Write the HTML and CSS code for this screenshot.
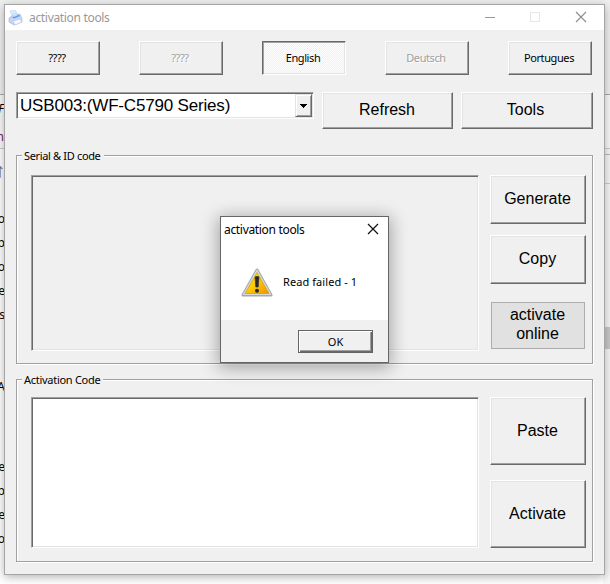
FILE: index.html
```html
<!DOCTYPE html>
<html lang="en">
<head>
<meta charset="utf-8">
<title>activation tools</title>
<link rel="stylesheet" href="styles.css">
</head>
<body>
<div class="desktop">
  <div class="backdrop">
    <div class="back-top"></div>
    <div class="back-tabs"><span class="b1">F</span><span class="b2">m</span></div>
    <div class="back-page">
      <div class="back-text">
        <div class="arrow">↑</div>
        <p>to<br>p<br>o<br>ne<br>s<br><br><br>A</p>
        <p>e<br>p<br>ne<br>o</p>
      </div>
      <div class="back-side"><div class="ruler"></div><div class="thumb"></div></div>
    </div>
  </div>

  <main class="window">
    <header class="titlebar">
      <svg class="printer" viewBox="0 0 16 16">
        <path d="M2 1 7 0 11 6 5 8Z" fill="#e4edfb" stroke="#c2d0ec" stroke-width=".7"/>
        <path d="M1 8 4 6 12 4 14 9 14 12 6 15 1 12Z" fill="#cbd3f3" stroke="#a9b4df" stroke-width=".7"/>
        <path d="M4 7.500 10 4.500 12 6 6 8.500Z" fill="#4aa3f5"/>
        <path d="M4 3 8 2 10 5 6 7Z" fill="#c5e5fb"/>
        <path d="M5 11 12 9 14 12 7 15Z" fill="#f5f8ff" stroke="#b5bfe5" stroke-width=".6"/>
      </svg>
      <span class="caption">activation tools</span>
      <svg class="controls" viewBox="0 0 110 12">
        <path d="M1 6.5H11" stroke="#999"/>
        <rect x="46.500" y="1.500" width="9" height="9" fill="none" stroke="#e6e6e6"/>
        <path d="M92 1 102 11M102 1 92 11" stroke="#8c8c8c" stroke-width="1.100"/>
      </svg>
    </header>
    <div class="client">
      <div class="languages">
        <button class="btn small">????</button>
        <button class="btn small off">????</button>
        <button class="btn small pressed">English</button>
        <button class="btn small off">Deutsch</button>
        <button class="btn small">Portugues</button>
      </div>
      <div class="device">
        <div class="combo"><span>USB003:(WF-C5790 Series)</span><i class="drop"><svg viewBox="0 0 7 4"><path d="M0 0H7V1H6V2H5V3H4V4H3V3H2V2H1V1H0Z"/></svg></i></div>
        <button class="btn refresh">Refresh</button>
        <button class="btn tools">Tools</button>
      </div>
      <section class="group serial">
        <h2><span class="t-serial">Serial &amp; ID code</span></h2>
        <div class="field"></div>
        <div class="actions">
          <button class="btn">Generate</button>
          <button class="btn">Copy</button>
          <button class="flat">activate<br>online</button>
        </div>
      </section>
      <section class="group activation">
        <h2><span class="t-code">Activation Code</span></h2>
        <div class="field white"></div>
        <div class="actions">
          <button class="btn">Paste</button>
          <button class="btn">Activate</button>
        </div>
      </section>
    </div>
  </main>

  <aside class="dialog">
    <header><span class="caption">activation tools</span>
      <svg class="close" viewBox="0 0 12 12"><path d="M1 1 11 11M11 1 1 11" stroke="#111" stroke-width="1.200"/></svg>
    </header>
    <div class="message">
      <svg class="warning" viewBox="0 0 32 29">
        <defs><linearGradient id="amber" x1="0" y1="0" x2="1" y2="1"><stop offset="0" stop-color="#fff200"/><stop offset=".5" stop-color="#fcc808"/><stop offset="1" stop-color="#ef9200"/></linearGradient></defs>
        <path d="M16 2 30 27H2Z" fill="#a4a9ae" stroke="#a4a9ae" stroke-width="3" stroke-linejoin="round"/>
        <path d="M16 2.500 29.300 26.300H2.700Z" fill="#d7dadd" stroke="#d7dadd" stroke-width="1.500" stroke-linejoin="round"/>
        <path d="M16 4.500 28 25.500H4Z" fill="url(#amber)" stroke="#d39b10" stroke-width=".7"/>
        <path d="M14 9Q16 7.500 18 9L17.200 19H14.800Z" fill="#252b32" stroke="#252b32" stroke-width=".6"/>
        <circle cx="16" cy="22.700" r="2" fill="#252b32"/>
      </svg>
      <span>Read failed - 1</span>
    </div>
    <footer><button class="ok"><span>OK</span></button></footer>
  </aside>
</div>
</body>
</html>
```
FILE: styles.css
```css
* { box-sizing: border-box; }
body { margin: 0; width: 610px; height: 584px; overflow: hidden; font: 16px "Liberation Sans", Arial, sans-serif; color: #000; }
button { margin: 0; padding: 0; font: inherit; color: #000; border-radius: 0; }
svg { display: block; }
.desktop { position: relative; width: 610px; height: 584px; overflow: hidden; }

/* page behind the window */
.backdrop { display: flex; flex-direction: column; height: 584px; background: #fff; font: 12px "Noto Sans", sans-serif; }
.back-top { flex: none; height: 94px; background: #f0f0f0; }
.back-tabs { flex: none; height: 55px; background: #fafafa; border-top: 1px solid #aaa; border-bottom: 1px solid #ccc; display: flex; flex-direction: column; line-height: 28px; }
.back-tabs span { display: flex; justify-content: flex-end; width: 4px; height: 28px; }
.b1 { font-style: italic; }
.b2 { color: #7a2460; }
.back-page { flex: 1; min-height: 0; display: flex; justify-content: space-between; }
.back-text { width: 5px; direction: rtl; line-height: 24px; white-space: nowrap; }
.back-text p { margin: 0 0 56px; }
.arrow { height: 58px; line-height: 42px; font-size: 20px; color: #777; }
.back-side { width: 7px; background: #f7f7f7; }
.ruler { height: 30px; margin-top: 5px; border-top: 1px solid #bbb; border-bottom: 1px solid #ccc; }
.thumb { height: 22px; margin-top: 143px; background: #c9c9c9; }

/* main window */
.window { position: absolute; left: 4px; top: 4px; width: 601px; height: 571px; background: #f0f0f0; border: 1px solid #a5a5a5; box-shadow: 0 2px 9px rgba(0,0,0,.3); }
.titlebar { display: flex; align-items: center; height: 25px; padding-left: 3px; background: #fff; color: #999; }
.printer { width: 16px; height: 16px; }
.caption { font: 12px "Noto Sans", sans-serif; white-space: nowrap; letter-spacing: -.32px; }
.titlebar .caption { margin-left: 5px; }
.controls { width: 110px; height: 12px; margin-left: auto; margin-right: 10px; margin-bottom: 2px; }
.client { padding: 11px; }

.btn { background: #f0f0f0; border: 1px solid; border-color: #fff #696969 #696969 #fff; box-shadow: inset -1px -1px #a0a0a0, inset 1px 1px #e3e3e3; padding-right: 1px; }
.small { width: 84px; height: 34px; padding: 0 2px 2px 0; font: 11px "Noto Sans", sans-serif; letter-spacing: -.4px; }
.off { color: #a0a0a0; text-shadow: 1px 1px #fff; }
.pressed { border-color: #696969 #fff #fff #696969; box-shadow: inset 1px 1px #a0a0a0, inset -1px -1px #e3e3e3; background: repeating-conic-gradient(#fff 0 25%, #f0f0f0 0 50%) 0 0 / 2px 2px; }
.languages { display: flex; justify-content: space-between; width: 576px; }
.device { display: flex; align-items: flex-start; margin-top: 17px; }
.combo { display: flex; width: 298px; height: 27px; padding: 1px; background: #fff; border: 1px solid; border-color: #a0a0a0 #fff #fff #a0a0a0; box-shadow: inset 1px 1px #696969, inset -1px -1px #e3e3e3; }
.combo span { flex: 1; padding-left: 2px; line-height: 23px; font-size: 17px; letter-spacing: -.18px; white-space: nowrap; }
.drop { display: flex; align-items: center; justify-content: center; width: 17px; background: #f0f0f0; border: 1px solid; border-color: #e3e3e3 #696969 #696969 #e3e3e3; box-shadow: inset 1px 1px #fff, inset -1px -1px #a0a0a0; }
.drop svg { width: 7px; height: 4px; }
.refresh { width: 131px; height: 37px; margin-left: 8px; padding-bottom: 2px; }
.tools { width: 132px; height: 37px; margin-left: 8px; padding: 0 3px 2px 0; }

.group { display: grid; grid-template-columns: 448px 96px; column-gap: 11px; position: relative; width: 577px; padding: 19px 0 0 14px; border: 1px solid #a0a0a0; box-shadow: 1px 1px #fff, inset 1px 1px #fff; }
.serial { height: 209px; margin-top: 26px; }
.activation { height: 183px; margin-top: 15px; }
.group h2 { position: absolute; left: 5px; top: -8px; margin: 0; padding: 0 3px 0 2px; background: #f0f0f0; font: 11px/16px "Noto Sans", sans-serif; white-space: nowrap; }
.t-serial { letter-spacing: -.34px; }
.t-code { letter-spacing: -.28px; }
.field { height: 176px; border: 1px solid; border-color: #a0a0a0 #fff #fff #a0a0a0; box-shadow: inset 1px 1px #696969, inset -1px -1px #e3e3e3; }
.white { height: 151px; margin-top: -2px; background: #fff; }
.actions { display: flex; flex-direction: column; }
.serial .btn { height: 49px; margin-bottom: 11px; padding-bottom: 2px; }
.flat { width: 94px; height: 47px; margin: 7px 1px 0; padding: 0 1px 3px 0; line-height: 19px; background: #e1e1e1; border: 1px solid #adadad; }
.activation .actions { gap: 15px; margin-top: -2px; }
.activation .btn { height: 68px; padding-bottom: 1px; }

/* message box */
.dialog { position: absolute; left: 220px; top: 216px; width: 169px; height: 147px; display: flex; flex-direction: column; background: #fff; border: 1px solid #666; box-shadow: 0 3px 16px 2px rgba(0,0,0,.32); }
.dialog header { display: flex; align-items: center; justify-content: space-between; height: 24px; padding: 0 9px 0 3px; }
.close { width: 12px; height: 12px; }
.message { flex: 1; display: flex; align-items: center; padding-left: 20px; font: 11px "Noto Sans", sans-serif; letter-spacing: .08px; }
.message span { margin: 2px 0 0 10px; white-space: nowrap; }
.warning { width: 32px; height: 29px; margin-top: 3px; }
.dialog footer { height: 42px; padding: 10px 15px 0 77px; background: #f0f0f0; }
.ok { display: block; width: 75px; height: 23px; padding-bottom: 1px; font: 11px "Noto Sans", sans-serif; background: #f0f0f0; border: 1px solid #646464; box-shadow: inset 1px 1px #fff, inset -1px -1px #696969, inset -2px -2px #a0a0a0; }
```
